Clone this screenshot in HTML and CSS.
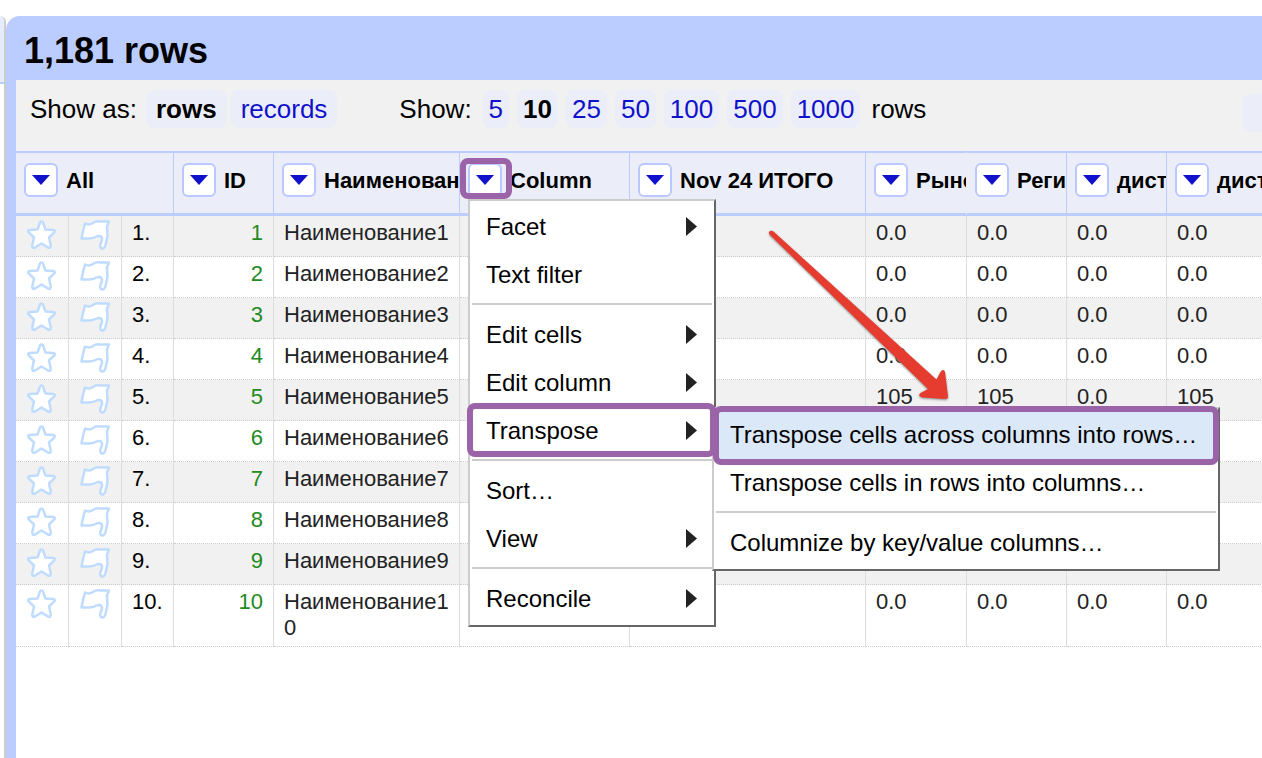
FILE: index.html
```html
<!DOCTYPE html>
<html lang="en">
<head>
<meta charset="utf-8">
<title>1,181 rows</title>
<link rel="stylesheet" href="styles.css">
</head>
<body>
<svg class="defs" aria-hidden="true">
  <symbol id="star" viewBox="0 0 30 30"><path d="M14.500 1.500Q16 1.500 16.500 4L18.500 9.500L26 10Q29 10.500 27 12.700L22 17.500L23.700 25Q24 28.800 21 27.500L14.500 23.500L8 27.500Q5 28.800 5.300 25L7 17.500L2 12.700Q0 10.500 3 10L10.500 9.500L12.500 4Q13 1.500 14.500 1.500Z"/></symbol>
  <symbol id="flag" viewBox="0 0 30 30"><path d="M5 3.500Q9 5.500 13 3Q16 .8 20 1.500L29 1.500L27 6.500L27.500 16L25.500 25Q24.500 28.800 22 28.500Q19.500 28 20.500 24L22 20Q22.500 15.500 18 16Q12 19 8 18.500L1.500 18.500L3 11Z"/></symbol>
  <symbol id="down" viewBox="0 0 18 10"><path d="M0 0H18L9 10Z"/></symbol>
  <symbol id="right" viewBox="0 0 11 19"><path d="M0 0L11 9.500L0 19Z"/></symbol>
</svg>
<div class="app">
  <aside class="facets"><div class="facets-head"></div></aside>
  <main class="panel">
    <h1 class="summary">1,181 rows</h1>
    <div class="controls">
      <div class="group modes"><span>Show as:</span><button class="pill wide on">rows</button><button class="pill wide">records</button></div>
      <div class="group sizes"><span class="label">Show:</span><button class="pill">5</button><button class="pill on">10</button><button class="pill">25</button><button class="pill">50</button><button class="pill">100</button><button class="pill">500</button><button class="pill">1000</button><span class="unit">rows</span></div>
      <button class="pill pager" aria-label="First page"></button>
    </div>
    <table class="grid">
      <colgroup><col class="c-icon"><col class="c-icon"><col class="c-num"><col class="c-id"><col class="c-name"><col class="c-column"><col class="c-total"><col class="c-first"><col class="c-id"><col class="c-id"><col class="c-id"></colgroup>
      <thead>
        <tr>
          <th colspan="3"><div class="head"><button class="drop" aria-label="All menu"><svg><use href="#down"/></svg></button>All</div></th>
          <th><div class="head"><button class="drop" aria-label="ID menu"><svg><use href="#down"/></svg></button>ID</div></th>
          <th><div class="head"><button class="drop" aria-label="Наименование menu"><svg><use href="#down"/></svg></button>Наименование</div></th>
          <th><div class="head"><button class="drop" aria-label="Column menu"><svg><use href="#down"/></svg></button>Column</div></th>
          <th><div class="head"><button class="drop" aria-label="Nov 24 ИТОГО menu"><svg><use href="#down"/></svg></button>Nov 24 ИТОГО</div></th>
          <th class="open"><div class="head"><button class="drop" aria-label="Рынок menu"><svg><use href="#down"/></svg></button>Рынок</div></th>
          <th><div class="head"><button class="drop" aria-label="Регион menu"><svg><use href="#down"/></svg></button>Регион</div></th>
          <th><div class="head"><button class="drop" aria-label="дистр menu"><svg><use href="#down"/></svg></button>дистр</div></th>
          <th><div class="head"><button class="drop" aria-label="дистр 2 menu"><svg><use href="#down"/></svg></button>дистр</div></th>
        </tr>
      </thead>
      <tbody id="rows"></tbody>
    </table>
  </main>
</div>

<div class="menu main-menu">
  <button class="item">Facet<svg><use href="#right"/></svg></button>
  <button class="item">Text filter</button>
  <hr>
  <button class="item">Edit cells<svg><use href="#right"/></svg></button>
  <button class="item">Edit column<svg><use href="#right"/></svg></button>
  <button class="item">Transpose<svg><use href="#right"/></svg></button>
  <hr>
  <button class="item">Sort…</button>
  <button class="item">View<svg><use href="#right"/></svg></button>
  <hr>
  <button class="item">Reconcile<svg><use href="#right"/></svg></button>
</div>
<div class="menu sub-menu">
  <button class="item active">Transpose cells across columns into rows…</button>
  <button class="item">Transpose cells in rows into columns…</button>
  <hr>
  <button class="item">Columnize by key/value columns…</button>
</div>

<div class="mark mark-drop"></div>
<div class="mark mark-transpose"></div>
<div class="mark mark-across"></div>
<svg class="arrow" viewBox="0 0 190 180" aria-hidden="true"><path d="M4.500 3.500Q6 2 8.500 3.500L171.500 151.500L175.500 144Q178.500 140 180 144L183 168.500Q183 171 180 171L158 169.500Q152 168 155.500 165L163 161L5.500 7.500Q3 5 4.500 3.500Z"/></svg>
<script src="rows.js"></script>
</body>
</html>
```
FILE: styles.css
```css
* { box-sizing: border-box; }
body {
  margin: 0;
  height: 100vh;
  overflow: hidden;
  position: relative;
  background: #fff;
  color: #000;
  font-family: "Liberation Sans", Arial, sans-serif;
}
button { font: inherit; color: inherit; border: 0; margin: 0; padding: 0; background: none; cursor: pointer; }
.defs { position: absolute; width: 0; height: 0; }
.app { display: flex; height: 100%; padding-top: 16px; }

.facets { flex: none; width: 6px; border-right: 2px solid #ccc; border-top-right-radius: 6px; overflow: hidden; }
.facets-head { height: 68px; background: #e6ecff; border-bottom: 2px solid #bbccff; }

.panel {
  flex: 1;
  min-width: 0;
  overflow: hidden;
  border-left: 10px solid #bbccff;
  border-top-left-radius: 14px;
  background: linear-gradient(#bbccff 64px, #fff 64px);
}
.summary { margin: 0; height: 64px; padding: 0 8px; background: #bbccff; font-size: 36px; line-height: 70px; }
.controls {
  display: flex;
  align-items: flex-start;
  height: 71px;
  padding: 10px 0 0 14px;
  background: #f1f1f1;
  font-size: 26px;
  line-height: 38px;
}
.group { display: flex; white-space: nowrap; }
.modes { gap: 4px; margin-right: 62px; }
.modes span { margin-right: 5px; }
.sizes { gap: 8px; }
.sizes .label { margin-right: 3px; }
.sizes .unit { margin-left: 3px; }
.pill { height: 38px; padding: 0 6px; border-radius: 8px; background: #ebeef8; color: #1111cc; }
.pill.wide { padding: 0 10px; }
.pill.on { color: #000; font-weight: bold; }
.pager { width: 40px; margin: 4px -20px 0 auto; }

.grid { table-layout: fixed; width: 1251px; border-collapse: separate; border-spacing: 0; font-size: 22px; line-height: 26px; }
.c-icon { width: 53px; }
.c-num { width: 52px; }
.c-id { width: 100px; }
.c-name { width: 186px; }
.c-column { width: 170px; }
.c-total { width: 236px; }
.c-first { width: 101px; }
th {
  height: 65px;
  padding: 10px 0 0 8px;
  vertical-align: top;
  text-align: left;
  background: #ebeef8;
  border-top: 2px solid #bbccff;
  border-bottom: 3px solid #bbccff;
  border-right: 1px solid #bbccff;
}
th.open { border-right-color: #ebeef8; }
.head { display: flex; align-items: flex-start; gap: 8px; overflow: hidden; white-space: nowrap; line-height: 36px; }
.drop {
  flex: none;
  display: flex;
  align-items: center;
  justify-content: center;
  width: 34px;
  height: 34px;
  border: 2px solid #bbc8ff;
  border-radius: 6px;
  background: #fff;
}
.drop svg { width: 18px; height: 10px; fill: #1111cc; }
td {
  height: 41px;
  padding: 4px 10px 5px;
  vertical-align: top;
  color: #222;
  border-right: 1px solid #ddd;
  border-bottom: 1px dotted #ccc;
  overflow-wrap: anywhere;
}
tbody tr:nth-child(odd) { background: #f1f1f1; }
td.index { color: #000; white-space: nowrap; }
td.number { color: #228b22; text-align: right; }
td.icon { padding: 4px 0 0 11px; }
td.icon svg { display: block; width: 30px; height: 30px; fill: #fff; stroke: #bfdcff; stroke-width: 2.500; stroke-linejoin: round; }

.menu { position: absolute; padding: 2px; background: #fff; border: 2px solid; border-color: #ccc #666 #666 #ccc; font-size: 24px; }
.main-menu { left: 468px; top: 199px; width: 248px; }
.sub-menu { left: 712px; top: 407px; width: 508px; }
.item { display: flex; align-items: center; justify-content: space-between; width: 100%; height: 48px; padding: 0 15px 0 14px; text-align: left; white-space: nowrap; }
.item.active { background: #dbe8f8; }
.item svg { width: 11px; height: 19px; margin-bottom: 2px; fill: #222; }
hr { height: 2px; margin: 4px 0 6px; border: 0; background: #ccc; }

.mark { position: absolute; border: 6px solid #9b63a8; border-radius: 8px; pointer-events: none; }
.mark-drop { left: 460px; top: 158px; width: 52px; height: 41px; }
.mark-transpose { left: 467px; top: 403px; width: 249px; height: 54px; }
.mark-across { left: 713px; top: 406px; width: 506px; height: 59px; }
.arrow { position: absolute; left: 765px; top: 228px; width: 190px; height: 180px; fill: #e63c30; filter: drop-shadow(0 1px 1px #888); pointer-events: none; }
```
FILE: rows.js
```js
const icon = name => `<td class="icon"><svg><use href="#${name}"/></svg></td>`;
let html = "";
for (let i = 1; i <= 10; i++) {
  const values = i === 5 ? ["105", "105", "0.0", "105"] : ["0.0", "0.0", "0.0", "0.0"];
  html += `<tr>${icon("star")}${icon("flag")}<td class="index">${i}.</td><td class="number">${i}</td><td>Наименование${i}</td><td></td><td></td>${values.map(v => `<td>${v}</td>`).join("")}</tr>`;
}
document.getElementById("rows").innerHTML = html;
```
